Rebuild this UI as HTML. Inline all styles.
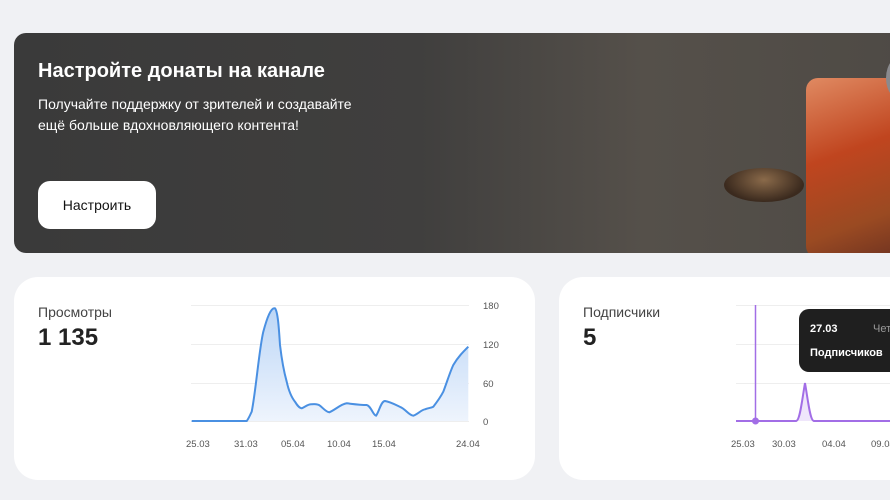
<!DOCTYPE html>
<html><head><meta charset="utf-8"><style>
body{margin:0;width:890px;height:500px;background:#f0f1f4;font-family:"Liberation Sans",sans-serif;overflow:hidden;position:relative}
.banner{position:absolute;left:14px;top:33px;width:900px;height:220px;border-radius:12px;background:linear-gradient(90deg,#3a3a3a 0%,#403f3e 45%,#55504a 70%,#4e4a45 100%);overflow:hidden}
.banner h1{position:absolute;left:24px;top:27px;margin:0;font-size:20px;font-weight:bold;color:#fff}
.banner p{position:absolute;left:24px;top:61px;margin:0;font-size:14px;line-height:21px;color:#fff}
.btn{position:absolute;left:24px;top:148px;width:118px;height:48px;border-radius:12px;background:#fff;color:#111;font-size:14px;line-height:48px;text-align:center}
.card{position:absolute;top:277px;height:203px;background:#fff;border-radius:24px}
.lbl{position:absolute;left:24px;top:27px;font-size:14px;color:#444}
.val{position:absolute;left:24px;top:47px;font-size:24px;font-weight:bold;color:#222}
svg text{font-family:"Liberation Sans",sans-serif;font-size:9.5px;fill:#555}
</style></head><body>
<div class="banner">
<h1>Настройте донаты на канале</h1>
<p>Получайте поддержку от зрителей и создавайте<br>ещё больше вдохновляющего контента!</p>
<div class="btn">Настроить</div>
<div style="position:absolute;left:710px;top:135px;width:80px;height:34px;border-radius:50%;background:radial-gradient(ellipse at 50% 35%,#8a6a4a,#3b2a1e 70%)"></div>
<div style="position:absolute;left:792px;top:45px;width:110px;height:180px;border-radius:12px;background:linear-gradient(160deg,#e08a62 0%,#c0451f 40%,#9a4a22 75%,#6a3020 100%)"></div>
<div style="position:absolute;left:872px;top:20px;width:40px;height:50px;border-radius:50%;background:#8a8a8e"></div>
</div>
<div class="card" style="left:14px;width:521px">
<div class="lbl">Просмотры</div><div class="val">1 135</div>
</div>
<div class="card" style="left:559px;width:360px">
<div class="lbl">Подписчики</div><div class="val">5</div>
</div>
<svg width="890" height="500" style="position:absolute;left:0;top:0">
<defs><linearGradient id="g" x1="0" y1="0" x2="0" y2="1"><stop offset="0" stop-color="#bcd6f6"/><stop offset="1" stop-color="#eef4fd"/></linearGradient></defs>
<g stroke="#eeeeee" stroke-width="1">
<line x1="191" y1="305.5" x2="469" y2="305.5"/><line x1="191" y1="344.5" x2="469" y2="344.5"/><line x1="191" y1="383.5" x2="469" y2="383.5"/><line x1="191" y1="421.5" x2="469" y2="421.5"/>
<line x1="736" y1="305.5" x2="890" y2="305.5"/><line x1="736" y1="344.5" x2="890" y2="344.5"/><line x1="736" y1="383.5" x2="890" y2="383.5"/>
</g>
<path d="M191.7,421 L246.7,421 C249,418 250,415 251.7,411.7 C256,390 259,350 263.3,331.7 C267,318 271,307 275,308.3 C278,312 279,330 280,345 C282,362 284,372 286.7,381.7 C289,392 292,398 295,401.7 C297,405 299,408 301.7,408.3 C305,407 308,404 311.7,404.3 C315,404 318,404 320,405.7 C323,408 326,412 329.3,412.3 C335,410 341,404 346.7,403.3 C353,404 360,405 366.7,405 C371,406 373,415 376,415.7 C379,412 381,401 385,401 C391,402 396,405 401.7,407.7 C406,410 409,415 413.3,415.7 C418,414 421,410 425,409.3 C428,408 431,408 433.3,406.7 C437,402 440,398 443.3,391.7 C447,382 450,372 453.3,365 C458,357 463,352 468.3,346.7 L468.3,421 Z" fill="url(#g)"/>
<path d="M191.7,421 L246.7,421 C249,418 250,415 251.7,411.7 C256,390 259,350 263.3,331.7 C267,318 271,307 275,308.3 C278,312 279,330 280,345 C282,362 284,372 286.7,381.7 C289,392 292,398 295,401.7 C297,405 299,408 301.7,408.3 C305,407 308,404 311.7,404.3 C315,404 318,404 320,405.7 C323,408 326,412 329.3,412.3 C335,410 341,404 346.7,403.3 C353,404 360,405 366.7,405 C371,406 373,415 376,415.7 C379,412 381,401 385,401 C391,402 396,405 401.7,407.7 C406,410 409,415 413.3,415.7 C418,414 421,410 425,409.3 C428,408 431,408 433.3,406.7 C437,402 440,398 443.3,391.7 C447,382 450,372 453.3,365 C458,357 463,352 468.3,346.7" fill="none" stroke="#4a90e2" stroke-width="2"/>
<text x="483" y="309">180</text><text x="483" y="348">120</text><text x="483" y="387">60</text><text x="483" y="425">0</text>
<text x="186" y="447">25.03</text><text x="234" y="447">31.03</text><text x="281" y="447">05.04</text><text x="327" y="447">10.04</text><text x="372" y="447">15.04</text><text x="456" y="447">24.04</text>
<path d="M796,421 C800,421 802,400 805,383 C808,400 810,421 814,421 Z" fill="#efe6fb"/>
<path d="M736,421 L796,421 C800,421 802,400 805,383 C808,400 810,421 814,421 L890,421" fill="none" stroke="#a26ee6" stroke-width="2"/>
<line x1="755.5" y1="305" x2="755.5" y2="421" stroke="#a26ee6" stroke-width="1.5"/>
<circle cx="755.5" cy="421" r="3.5" fill="#a26ee6"/>
<text x="731" y="447">25.03</text><text x="772" y="447">30.03</text><text x="822" y="447">04.04</text><text x="871" y="447">09.04</text>
<rect x="799" y="309" width="120" height="63" rx="10" fill="#1f1f1f"/>
<text x="810" y="332" style="fill:#fff;font-size:11px;font-weight:bold">27.03</text>
<text x="873" y="332" style="fill:#999;font-size:11px">Чет</text>
<text x="810" y="356" style="fill:#fff;font-size:11px;font-weight:bold">Подписчиков</text>
</svg>
</body></html>
